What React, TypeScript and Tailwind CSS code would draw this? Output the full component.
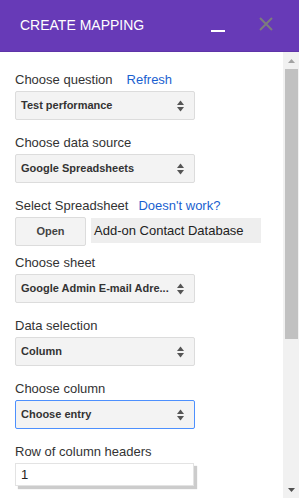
import React from "react";

const font = { fontFamily: '"Liberation Sans", Arial, sans-serif' };

function Arrows() {
  return (
    <svg width="7" height="12" viewBox="0 0 7 12" className="shrink-0">
      <path d="M3.5 0.5 L7 5 L0 5 Z" fill="#555" />
      <path d="M0 7 L7 7 L3.5 11.5 Z" fill="#555" />
    </svg>
  );
}

function Select({ text, focused }: { text: string; focused?: boolean }) {
  return (
    <div
      className={
        focused
          ? "h-[29px] w-[180px] border border-[#4d90fe] rounded-[2px] bg-[#f3f3f3] flex items-center justify-between pl-[5px] pr-[10px]"
          : "h-[29px] w-[180px] border border-[#dcdcdc] rounded-[2px] bg-[#f3f3f3] flex items-center justify-between pl-[5px] pr-[10px]"
      }
    >
      <span className="text-[11px] font-bold text-[#333] whitespace-nowrap">{text}</span>
      <Arrows />
    </div>
  );
}

function Label({ text, link, linkClass }: { text: string; link?: string; linkClass?: string }) {
  return (
    <div className="h-[17px] leading-[17px] text-[13px] text-[#333] mb-[3px] flex whitespace-nowrap">
      <span>{text}</span>
      {link && <span className={linkClass}>{link}</span>}
    </div>
  );
}

function Group({ label, value, link, linkClass, focused }: { label: string; value: string; link?: string; linkClass?: string; focused?: boolean }) {
  return (
    <div className="flex flex-col mb-[14px]">
      <Label text={label} link={link} linkClass={linkClass} />
      <Select text={value} focused={focused} />
    </div>
  );
}

export default function App() {
  return (
    <div className="w-[299px] h-[498px] flex flex-col bg-white overflow-hidden" style={font}>
      <div className="h-[52px] shrink-0 bg-[#673ab7] border-b border-[#5e34a8] flex items-center pl-[20px] pr-[26px]">
        <span className="text-white text-[14px] tracking-[0px]">CREATE MAPPING</span>
        <div className="ml-auto w-[14px] h-[2px] mt-[10px] bg-white" />
        <svg width="14" height="14" viewBox="0 0 14 14" className="ml-[34px] mb-[4px]">
          <path d="M1 1 L13 13 M13 1 L1 13" stroke="#7c7c7c" strokeWidth="2" />
        </svg>
      </div>
      <div className="flex flex-1 min-h-0">
        <div className="flex-1 overflow-hidden px-[15px] pt-[19px]">
          <Group label="Choose question" value="Test performance" link="Refresh" linkClass="ml-[14px] text-[#1a5fd0]" />
          <Group label="Choose data source" value="Google Spreadsheets" />
          <div className="flex flex-col mb-[8px]">
            <Label text="Select Spreadsheet" link="Doesn't work?" linkClass="ml-[10px] text-[#1a5fd0]" />
            <div className="flex items-start">
              <div className="w-[71px] h-[29px] border border-[#dcdcdc] rounded-[2px] bg-[#f3f3f3] flex items-center justify-center text-[11px] font-bold text-[#444]">
                Open
              </div>
              <div className="ml-[5px] mt-[1px] w-[170px] h-[25px] bg-[#eeeeee] flex items-center pl-[3px] text-[13px] text-[#222] whitespace-nowrap">
                Add-on Contact Database
              </div>
            </div>
          </div>
          <Group label="Choose sheet" value="Google Admin E-mail Adre..." />
          <Group label="Data selection" value="Column" />
          <Group label="Choose column" value="Choose entry" focused />
          <div className="flex flex-col">
            <Label text="Row of column headers" />
            <div className="w-[179px] h-[23px] border border-[#e3e3e3] bg-white shadow-[3px_3px_1px_rgba(0,0,0,0.2)] flex items-center pl-[5px] text-[13px] text-[#222]">
              1
            </div>
          </div>
        </div>
        <div className="w-[16px] shrink-0 bg-[#f1f1f1] flex flex-col">
          <div className="h-[17px] flex items-center justify-center">
            <svg width="7" height="4" viewBox="0 0 7 4">
              <path d="M3.5 0 L7 4 L0 4 Z" fill="#a3a3a3" />
            </svg>
          </div>
          <div className="h-[270px] ml-[2px] mr-[1px] bg-[#c1c1c1]" />
          <div className="flex-1" />
          <div className="h-[17px] flex items-center justify-center">
            <svg width="7" height="4" viewBox="0 0 7 4">
              <path d="M0 0 L7 0 L3.5 4 Z" fill="#505050" />
            </svg>
          </div>
        </div>
      </div>
    </div>
  );
}
